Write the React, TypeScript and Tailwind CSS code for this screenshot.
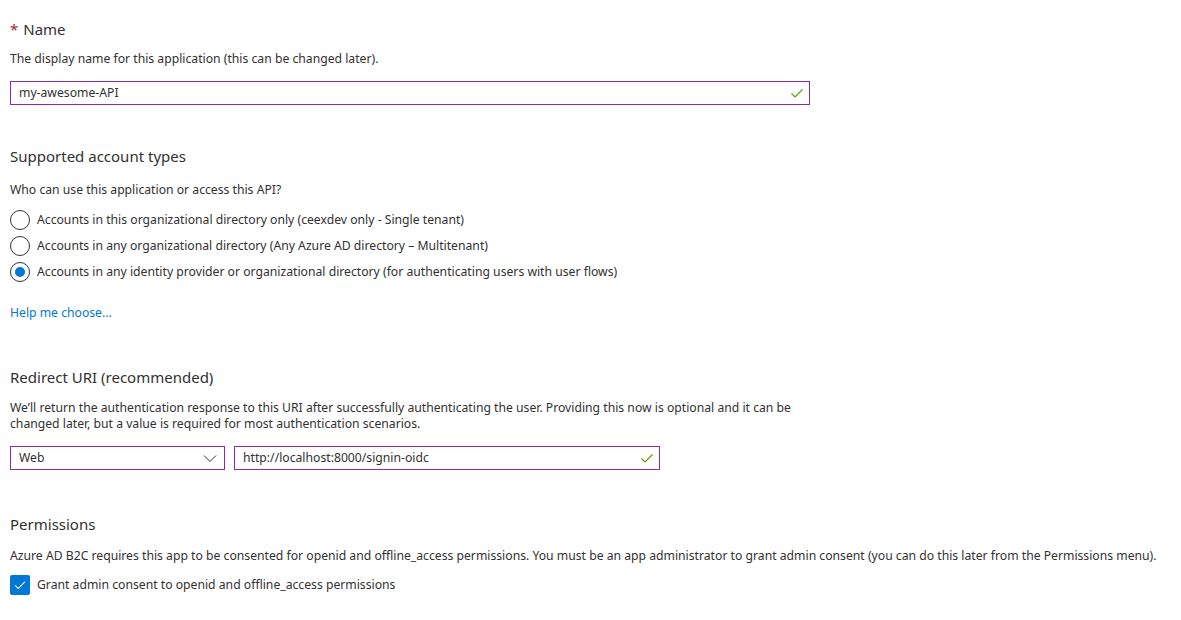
import { useState } from 'react'

const font = { fontFamily: '"Noto Sans", "Open Sans", sans-serif' }

function Check({ className }: { className?: string }) {
  return (
    <svg viewBox="0 0 16 16" className={className} fill="none">
      <path d="M2.5 8.5 L6 12 L13.5 4.5" stroke="currentColor" strokeWidth="1.2" />
    </svg>
  )
}

function Radio({ checked, label }: { checked: boolean; label: string }) {
  return (
    <label className="flex items-center h-[26px]">
      <span className="w-5 h-5 rounded-full border border-[#323130] flex items-center justify-center mr-[7px]">
        {checked && <span className="w-[10px] h-[10px] rounded-full bg-[#0078d4]" />}
      </span>
      <span>{label}</span>
    </label>
  )
}

export default function App() {
  const [account] = useState(2)
  const accountTypes = [
    'Accounts in this organizational directory only (ceexdev only - Single tenant)',
    'Accounts in any organizational directory (Any Azure AD directory \u2013 Multitenant)',
    'Accounts in any identity provider or organizational directory (for authenticating users with user flows)',
  ]

  return (
    <div className="min-h-screen bg-white text-[#323130] text-[12.2px] px-[10px] pt-[19px]" style={font}>
      <h2 className="text-[15px] leading-[20px]">
        <span className="text-[#a4262c] mr-[5px]">*</span>Name
      </h2>
      <p className="mt-[12px] leading-[16px]">The display name for this application (this can be changed later).</p>
      <div className="mt-[14px] w-[800px] h-[24px] border border-[#8a2da5] flex items-center pl-[8px] pr-[4px]">
        <span className="flex-1">my-awesome-API</span>
        <Check className="w-4 h-4 text-[#57a300]" />
      </div>

      <h2 className="mt-[41px] text-[15px] leading-[20px]">Supported account types</h2>
      <p className="mt-[16px] leading-[16px]">Who can use this application or access this API?</p>
      <div className="mt-[9px] flex flex-col">
        {accountTypes.map((t, i) => (
          <Radio key={i} checked={i === account} label={t} />
        ))}
      </div>
      <a className="block mt-[20px] leading-[16px] text-[#0078d4]">Help me choose...</a>

      <h2 className="mt-[46px] text-[15px] leading-[20px]">Redirect URI (recommended)</h2>
      <p className="mt-[13px] leading-[16px] w-[800px]">
        We’ll return the authentication response to this URI after successfully authenticating the user. Providing this now is optional and it can be changed later, but a value is required for most authentication scenarios.
      </p>
      <div className="mt-[14px] flex gap-[9px]">
        <div className="w-[215px] h-[24px] border border-[#8a2da5] flex items-center pl-[8px] pr-[6px]">
          <span className="flex-1">Web</span>
          <svg viewBox="0 0 16 16" className="w-4 h-4" fill="none">
            <path d="M2 5.5 L8 11.5 L14 5.5" stroke="#323130" strokeWidth="1" />
          </svg>
        </div>
        <div className="w-[426px] h-[24px] border border-[#8a2da5] flex items-center pl-[8px] pr-[4px]">
          <span className="flex-1">http://localhost:8000/signin-oidc</span>
          <Check className="w-4 h-4 text-[#57a300]" />
        </div>
      </div>

      <h2 className="mt-[44px] text-[15px] leading-[20px]">Permissions</h2>
      <p className="mt-[14px] leading-[16px]">
        Azure AD B2C requires this app to be consented for openid and offline_access permissions. You must be an app administrator to grant admin consent (you can do this later from the Permissions menu).
      </p>
      <label className="mt-[11px] flex items-center">
        <span className="w-5 h-5 rounded-[2px] bg-[#0078d4] flex items-center justify-center mr-[7px]">
          <Check className="w-[14px] h-[14px] text-white" />
        </span>
        <span>Grant admin consent to openid and offline_access permissions</span>
      </label>
    </div>
  )
}
